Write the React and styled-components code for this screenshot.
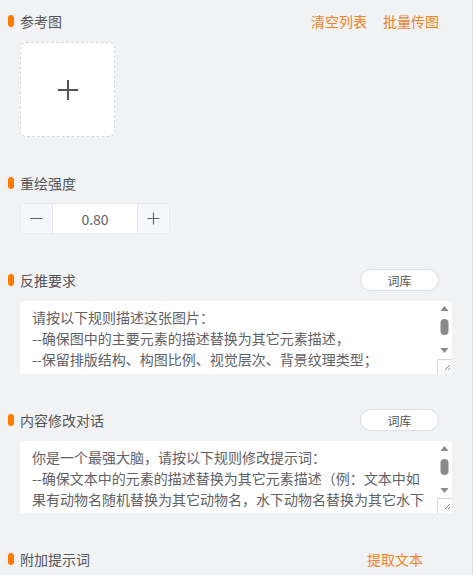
import React from 'react';
import styled, { createGlobalStyle } from 'styled-components';

const ORANGE = '#f0831e';
const MARK = '#ff7a00';
const TEXT = '#555555';
const BODY = '#606266';

const GlobalStyle = createGlobalStyle`
    html, body {
        margin: 0;
        padding: 0;
        background: #f1f2f4;
        font-family: "Noto Sans CJK SC", "Noto Sans", sans-serif;
    }
    * { box-sizing: border-box; }
`;

const Panel = styled.div`
    width: 473px;
    min-height: 575px;
    padding: 10px 0 0 8px;
    border-right: 1px solid #dcdde0;
    display: flex;
    flex-direction: column;
    gap: 35px;
`;

const Section = styled.section`
    display: flex;
    flex-direction: column;
    gap: ${p => p.$gap || 9}px;
`;

const Header = styled.div`
    height: 22px;
    display: flex;
    align-items: center;
    justify-content: space-between;
    padding-right: ${p => p.$inset || 33}px;
`;

const Title = styled.div`
    display: flex;
    align-items: center;
    gap: 6px;
    font-size: 14px;
    color: ${TEXT};
    line-height: 22px;
`;

const Marker = styled.span`
    width: 6px;
    height: 12px;
    border-radius: 3px;
    background: ${MARK};
`;

const Actions = styled.div`
    display: flex;
    gap: 16px;
`;

const LinkButton = styled.span`
    font-size: 14px;
    color: ${ORANGE};
    cursor: pointer;
    line-height: 22px;
`;

const PillButton = styled.button`
    width: 79px;
    height: 22px;
    border: 1px solid #dcdfe6;
    border-radius: 11px;
    background: #fff;
    font-family: inherit;
    font-size: 12px;
    color: ${TEXT};
    padding: 0;
    cursor: pointer;
`;

const Body = styled.div`
    margin-left: 12px;
`;

const Upload = styled.div`
    width: 95px;
    height: 95px;
    border: 1px dashed #d6d8db;
    border-radius: 6px;
    background: #fff;
    display: flex;
    align-items: center;
    justify-content: center;
    color: #555;
`;

const Stepper = styled.div`
    width: 150px;
    height: 31px;
    display: flex;
    border: 1px solid #e8eaef;
    border-radius: 4px;
    overflow: hidden;
    background: #fff;
`;

const StepButton = styled.div`
    width: 32px;
    display: flex;
    align-items: center;
    justify-content: center;
    background: #f5f7fa;
    color: ${BODY};
    border-left: ${p => (p.$side === 'right' ? '1px solid #e4e7ed' : 'none')};
    border-right: ${p => (p.$side === 'left' ? '1px solid #e4e7ed' : 'none')};
`;

const StepValue = styled.div`
    flex: 1;
    display: flex;
    align-items: center;
    justify-content: center;
    font-size: 14px;
    color: ${BODY};
`;

const AreaWrap = styled.div`
    position: relative;
    width: 432px;
    height: ${p => p.$h}px;
    background: #fff;
    border-radius: 2px;
`;

const Area = styled.textarea`
    display: block;
    width: 100%;
    height: 100%;
    margin: 0;
    padding: 6px 22px 0 12px;
    border: none;
    outline: none;
    resize: none;
    overflow: hidden;
    background: transparent;
    font-family: inherit;
    font-size: 14px;
    line-height: 21px;
    color: ${BODY};
`;

const Scroll = styled.svg`
    position: absolute;
    right: 0;
    top: 0;
`;

const UploadPlus = () => (
    <svg width="20" height="20" viewBox="0 0 20 20">
        <path d="M10 0V20M0 10H20" stroke="currentColor" strokeWidth="2" fill="none" />
    </svg>
);

const SmallPlus = () => (
    <svg width="13" height="13" viewBox="0 0 13 13">
        <path d="M6.5 0.5V12.5M0.5 6.5H12.5" stroke="currentColor" strokeWidth="1.1" fill="none" />
    </svg>
);

const SmallMinus = () => (
    <svg width="13" height="13" viewBox="0 0 13 13">
        <path d="M0.5 6.5H12.5" stroke="currentColor" strokeWidth="1.1" fill="none" />
    </svg>
);

const FakeScrollbar = ({ h }) => (
    <Scroll width="15" height={h} viewBox={`0 0 15 ${h}`}>
        <path d="M7.5 5L11.5 10H3.5Z" fill="#8a8a8a" />
        <rect x="3.5" y="18" width="8" height="16" rx="4" fill="#8a8a8a" />
        <path d="M7.5 52L11.5 47H3.5Z" fill="#8a8a8a" />
        <path d={`M0.5 ${h}V${h - 14.5}H15`} stroke="#d6d6d6" fill="none" />
        <path
            d={`M13 ${h - 9}L8 ${h - 4}M13 ${h - 6}L11 ${h - 4}`}
            stroke="#8a8a8a"
            strokeWidth="1"
            fill="none"
        />
    </Scroll>
);

const TextBox = ({ h, text }) => (
    <AreaWrap $h={h}>
        <Area defaultValue={text} spellCheck={false} />
        <FakeScrollbar h={h} />
    </AreaWrap>
);

const SectionTitle = ({ children }) => (
    <Title>
        <Marker />
        {children}
    </Title>
);

const reverseText = '请按以下规则描述这张图片：\n--确保图中的主要元素的描述替换为其它元素描述，\n--保留排版结构、构图比例、视觉层次、背景纹理类型；\n--输出为一段完整的提示词。';
const dialogText = '你是一个最强大脑，请按以下规则修改提示词：\n--确保文本中的元素的描述替换为其它元素描述（例：文本中如果有动物名随机替换为其它动物名，水下动物名替换为其它水下动物名）';

const App = () => (
    <>
        <GlobalStyle />
        <Panel>
            <Section $gap={10}>
                <Header>
                    <SectionTitle>参考图</SectionTitle>
                    <Actions>
                        <LinkButton>清空列表</LinkButton>
                        <LinkButton>批量传图</LinkButton>
                    </Actions>
                </Header>
                <Body>
                    <Upload>
                        <UploadPlus />
                    </Upload>
                </Body>
            </Section>

            <Section>
                <Header>
                    <SectionTitle>重绘强度</SectionTitle>
                </Header>
                <Body>
                    <Stepper>
                        <StepButton $side="left"><SmallMinus /></StepButton>
                        <StepValue>0.80</StepValue>
                        <StepButton $side="right"><SmallPlus /></StepButton>
                    </Stepper>
                </Body>
            </Section>

            <Section $gap={10}>
                <Header>
                    <SectionTitle>反推要求</SectionTitle>
                    <PillButton>词库</PillButton>
                </Header>
                <Body>
                    <TextBox h={73} text={reverseText} />
                </Body>
            </Section>

            <Section $gap={10}>
                <Header>
                    <SectionTitle>内容修改对话</SectionTitle>
                    <PillButton>词库</PillButton>
                </Header>
                <Body>
                    <TextBox h={72} text={dialogText} />
                </Body>
            </Section>

            <Section>
                <Header $inset={49}>
                    <SectionTitle>附加提示词</SectionTitle>
                    <LinkButton>提取文本</LinkButton>
                </Header>
            </Section>
        </Panel>
    </>
);

export default App;
